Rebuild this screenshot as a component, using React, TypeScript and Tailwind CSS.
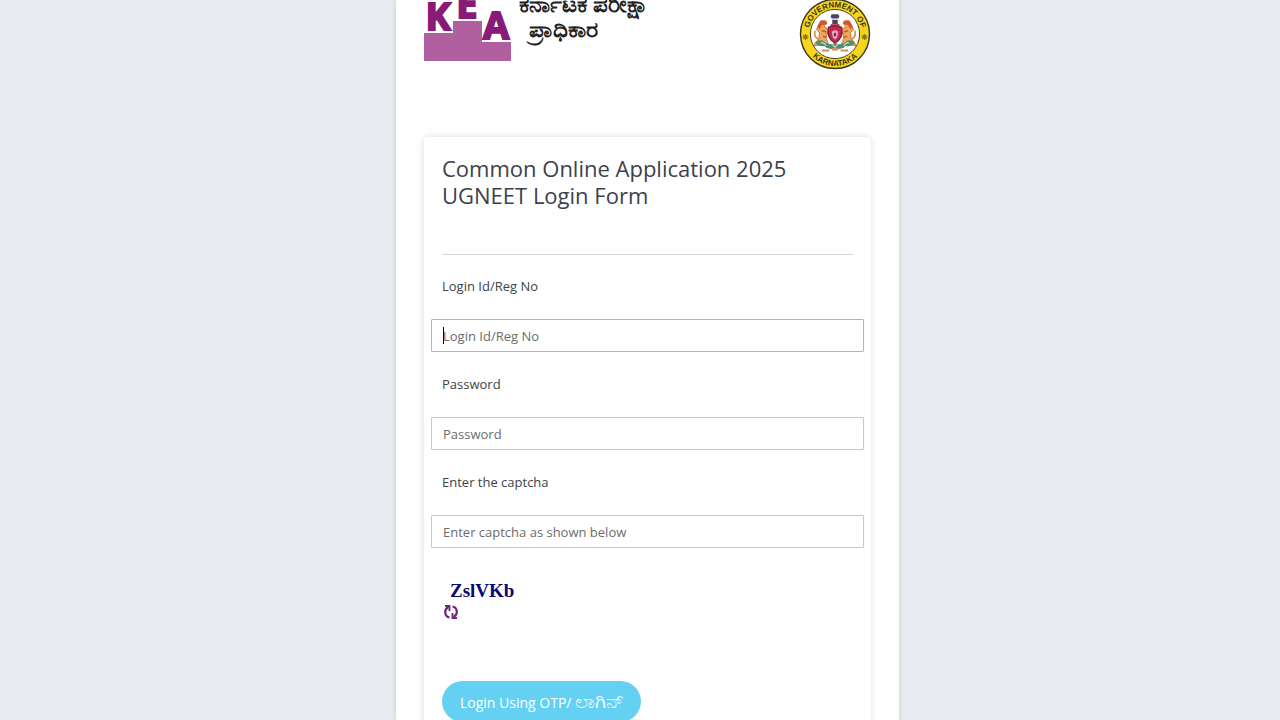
interface FieldProps {
  id: string;
  label: string;
  placeholder: string;
  type?: "text" | "password";
  active?: boolean;
}

const Field = ({ id, label, placeholder, type = "text", active }: FieldProps) => {
  return (
    <div className="mb-[22px]">
      <label htmlFor={id} className="block px-[11px] mb-[23px] text-[13px] leading-5 text-[#3e4347]">
        {label}
      </label>

      <div className="relative">
        <input
          id={id}
          type={type}
          placeholder={placeholder}
          className={`block w-full h-[33px] px-[11px] border rounded-[1px] bg-white text-[13px] placeholder:text-[#6c6c6c] outline-none ${
            active ? "border-[#b0b4c4]" : "border-[#c6c8cb]"
          }`}
        />
        {active && <span className="absolute left-3 top-2 h-[17px] w-px bg-black" />}
      </div>
    </div>
  );
};

const KeaLogo = () => {
  return (
    <svg width="87" height="77" viewBox="0 0 87 77" role="img" aria-label="KEA">
      <path d="M0 49H29V37H58V58H87V77H0Z" fill="#b0609f" />
      <g
        fill="#8a1a78"
        stroke="#8a1a78"
        strokeWidth="2"
        fontFamily="'Open Sans', sans-serif"
        fontWeight="700"
        fontSize="38"
        textAnchor="middle"
      >
        <text x="14" y="46">K</text>
        <text x="43" y="34">E</text>
        <text x="72" y="55">A</text>
      </g>
    </svg>
  );
};

const Emblem = () => {
  return (
    <svg width="72" height="72" viewBox="-36 -36 72 72" role="img" aria-label="Government of Karnataka">
      <circle r="34.5" fill="#f7d51c" stroke="#37351f" strokeWidth="1.4" />
      <circle r="24.6" fill="#fff" stroke="#4a451f" strokeWidth="1" />

      <path id="arcTop" d="M-26.500 0A26.500 26.500 0 0 1 26.500 0" fill="none" />
      <path id="arcBottom" d="M-32 0A32 32 0 0 0 32 0" fill="none" />
      <g fill="#38330f" fontFamily="'Liberation Sans', sans-serif" fontWeight="700" fontSize="8" textAnchor="middle">
        <text>
          <textPath href="#arcTop" startOffset="50%">GOVERNMENT OF</textPath>
        </text>
        <text>
          <textPath href="#arcBottom" startOffset="50%">KARNATAKA</textPath>
        </text>
      </g>
      <g stroke="#8c7415" strokeWidth="1.1">
        <path d="M-29.500 0v6M-32.500 3h6M-31.500 1l4 4M-27.500 1l-4 4" />
        <path d="M29.500 0v6M26.500 3h6M27.500 1l4 4M31.500 1l-4 4" />
      </g>

      <g transform="scale(1.1) translate(0 2)">
        {/* lions */}
        <g fill="#eba858" stroke="#c0602a" strokeWidth="0.7">
          <path d="M-13-14l4 0 1 3-2 2 4 3 3-1 0 2-4 2-1 5 2 5-3 1-2-4-4 4-4 1 1-3 3-3 1-6-3-3 2-4z" />
          <path d="M13-14l-4 0-1 3 2 2-4 3-3-1 0 2 4 2 1 5-2 5 3 1 2-4 4 4 4 1-1-3-3-3-1-6 3-3-2-4z" />
        </g>
        <path d="M-13-14l5 0 1 3-5 1-2 4-2-3zM13-14l-5 0-1 3 5 1 2 4 2-3z" fill="#d4552d" />
        <path d="M-12-5l4 1M12-5l-4 1M-11 0l3 1M11 0l-3 1" stroke="#d4552d" strokeWidth="1.4" />
        <path d="M-15 3q-5-3-3-8M15 3q5-3 3-8" fill="none" stroke="#d88a3a" strokeWidth="1.4" />

        {/* crest and shield */}
        <path d="M-3-20h6l1 2-1 2h-6l-1-2zM-2.500-15h5v4h-5z" fill="#4c4463" />
        <path d="M-4-11h8v2h-8z" fill="#c73c45" />
        <path d="M-6-8Q0-11 6-8Q8 2 0 6Q-8 2-6-8Z" fill="#c62650" stroke="#74233d" strokeWidth="1.2" />
        <path d="M-3-4Q0-7 3-4L2 1L0 3L-2 1Z" fill="#f0a9ba" />
        <path d="M-1-3h2v3h-2z" fill="#6b3350" />

        {/* foliage and scroll */}
        <path
          d="M-18 6q3-4 8-1 5 4 10 1 5 3 10-1 5-3 8 1-3 4-8 3-4 4-10 2-6 2-10-2-5 1-8-3z"
          fill="#4f8d76"
        />
        <path d="M-13 6q3-1 5 3M13 6q-3-1-5 3M-3 7l3 3 3-3" fill="none" stroke="#c7d9b8" strokeWidth="1" />
        <path d="M-12 13h7M12 13h-7M-3 12h6" stroke="#d8895e" strokeWidth="2" />
      </g>
    </svg>
  );
};

const RefreshIcon = () => {
  return (
    <svg width="14" height="16" viewBox="0 0 14 16" fill="none" stroke="#712678" strokeWidth="2.2">
      <path d="M5.500 13.500C.5 12.500-.5 5.500 4.500 3" />
      <path d="M8.500 2.500C13.500 3.500 14.500 10.500 9.500 13" />
      <path d="M1 2h4.500v5M13 14H8.500V9" strokeWidth="1.8" />
    </svg>
  );
};

const App = () => {
  return (
    <div className="h-screen overflow-hidden bg-[#e8ecf1] pl-[15px] font-['Open_Sans',sans-serif]">
      <main className="mx-auto w-full max-w-[503px] h-full overflow-hidden bg-white px-7 shadow-[0_0_6px_rgba(0,0,0,0.14)]">

        <header className="-mt-4 flex items-start">
          <KeaLogo />
          <p className="ml-2 mt-[7px] text-[23px] leading-[25px] font-semibold whitespace-nowrap text-[#222]">
            ಕರ್ನಾಟಕ ಪರೀಕ್ಷಾ
            <br />
            <span className="ml-2.5">ಪ್ರಾಧಿಕಾರ</span>
          </p>
          <div className="ml-auto mt-3.5">
            <Emblem />
          </div>
        </header>

        <form
          className="mt-[67px] px-[7px] pt-[18px] pb-10 bg-white rounded-sm shadow-[0_0_7px_rgba(0,0,0,0.14)]"
          onSubmit={(e) => e.preventDefault()}
        >
          <div className="mx-[11px] mb-[21px] pb-[45px] border-b border-[#d3d5d9]">
            <h1 className="text-[22px] leading-[27px] text-[#3b424d]">
              Common Online Application 2025 UGNEET Login Form
            </h1>
          </div>

          <Field id="loginId" label="Login Id/Reg No" placeholder="Login Id/Reg No" active />
          <Field id="password" label="Password" placeholder="Password" type="password" />
          <Field id="captcha" label="Enter the captcha" placeholder="Enter captcha as shown below" />

          <div className="px-[11px] pt-[11px]">
            <p className="pl-2 font-['Liberation_Serif',serif] text-[19px] leading-5 font-bold text-[#0b0870]">ZslVKb</p>
            <button type="button" aria-label="Refresh captcha" className="block mt-[3px] ml-0.5">
              <RefreshIcon />
            </button>

            <button
              type="submit"
              className="mt-[61px] h-[41px] px-[18px] rounded-full bg-[#64d1f3] text-sm font-medium text-white whitespace-nowrap"
            >
              Login Using OTP/ <span className="text-xl leading-5">ಲಾಗಿನ್</span>
            </button>
          </div>
        </form>

      </main>
    </div>
  );
};

export default App;
